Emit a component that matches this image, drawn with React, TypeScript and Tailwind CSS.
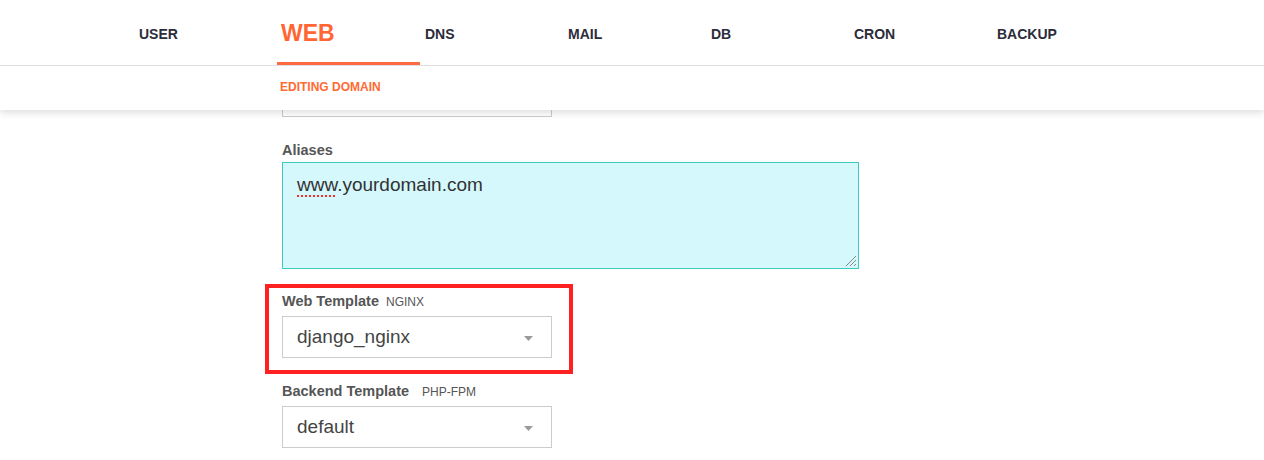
const TABS = ['USER', 'WEB', 'DNS', 'MAIL', 'DB', 'CRON', 'BACKUP'];

function Caret() {
  return (
    <svg width="9" height="5" viewBox="0 0 9 5" className="absolute right-[18px] top-[19px]">
      <path d="M0 0 L9 0 L4.5 5 Z" fill="#9a9a9a" />
    </svg>
  );
}

function SelectBox({ value }: { value: string }) {
  return (
    <div className="relative w-[270px] h-[42px] border border-[#cccccc] bg-white flex items-center pl-[14px] pt-[1px] text-[19px] text-[#444]">
      {value}
      <Caret />
    </div>
  );
}

export default function App() {
  return (
    <div className="min-h-screen bg-white font-['Liberation_Sans',Arial,sans-serif] overflow-hidden h-[460px]">
      <div className="relative z-10 bg-white shadow-[0_3px_7px_rgba(0,0,0,0.13)]">
        <div className="h-[66px] border-b border-[#dedede] flex pl-[134px]">
          {TABS.map((tab) =>
            tab === 'WEB' ? (
              <div
                key={tab}
                className="w-[143px] h-full flex items-center pl-[4px] pt-[4px] border-b-[3px] border-[#ff6a45] text-[23px] font-bold text-[#ff6633]"
              >
                {tab}
              </div>
            ) : (
              <div
                key={tab}
                className="w-[143px] h-full flex items-center pl-[5px] pt-[3px] text-[14px] font-bold text-[#2c2c3a]"
              >
                {tab}
              </div>
            )
          )}
        </div>
        <div className="h-[44px] flex items-center pl-[280px] pb-[2px] text-[12px] font-bold text-[#ff6a33]">
          EDITING DOMAIN
        </div>
      </div>

      <div className="pl-[282px]">
        <div className="w-[270px] h-[40px] -mt-[33px] border border-[#cccccc]" />

        <div className="mt-[25px] h-[16px] leading-[16px] text-[14.5px] font-bold text-[#555]">Aliases</div>
        <div className="relative mt-[4px] w-[577px] h-[107px] border border-[#3ccbc0] bg-[#d5f8fd] pl-[14px] pt-[11px] text-[19px] leading-[22px] text-[#333]">
          <span className="underline decoration-dotted decoration-[#ff2a2a] decoration-2 underline-offset-[4px]">www</span>
          .yourdomain.com
          <svg width="12" height="12" viewBox="0 0 12 12" className="absolute right-[1px] bottom-[1px]">
            <path d="M11 1 L1 11 M11 5 L5 11 M11 9 L9 11" stroke="#888" strokeWidth="1" />
          </svg>
        </div>

        <div className="mt-[15px] -ml-[17px] w-[308px] border-4 border-[#ff2121] pl-[13px] pt-[5px] pb-[12px]">
          <div className="h-[16px] leading-[16px] flex items-baseline">
            <span className="text-[14.5px] font-bold text-[#555]">Web Template</span>
            <span className="ml-[7px] text-[12px] text-[#555]">NGINX</span>
          </div>
          <div className="mt-[7px]">
            <SelectBox value="django_nginx" />
          </div>
        </div>

        <div className="mt-[9px] h-[16px] leading-[16px] flex items-baseline">
          <span className="text-[14.5px] font-bold text-[#555]">Backend Template</span>
          <span className="ml-[13px] text-[12px] text-[#555]">PHP-FPM</span>
        </div>
        <div className="mt-[7px]">
          <SelectBox value="default" />
        </div>
      </div>
    </div>
  );
}
